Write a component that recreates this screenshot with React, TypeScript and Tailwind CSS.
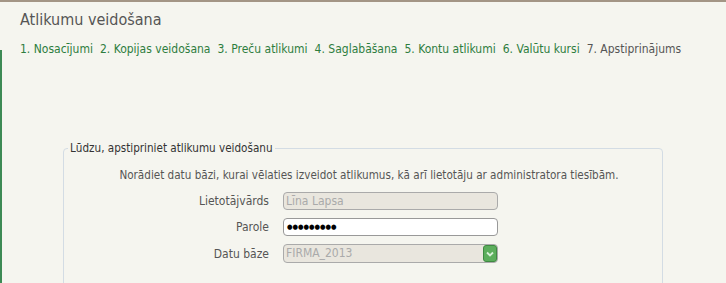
import React from "react";

export default function App() {
  const steps = [
    "1. Nosacījumi",
    "2. Kopijas veidošana",
    "3. Preču atlikumi",
    "4. Saglabāšana",
    "5. Kontu atlikumi",
    "6. Valūtu kursi",
  ];
  return (
    <div
      className="w-[726px] h-[283px] overflow-hidden bg-[#f5f5ef] border-t-2 border-[#a39585] relative"
      style={{ fontFamily: "'DejaVu Sans Condensed', 'DejaVu Sans', sans-serif" }}
    >
      <div className="absolute left-0 top-[48px] bottom-0 w-[2px] bg-[#3d8a55]" />
      <div className="pl-[20px] pt-[8px]">
        <h1 className="text-[16px] leading-[20px] text-[#555]">Atlikumu veidošana</h1>
        <div className="mt-[12px] flex gap-[7px] text-[12px] leading-[14px]">
          {steps.map((s) => (
            <span key={s} className="text-[#2e7d3e]">{s}</span>
          ))}
          <span className="text-[#555]">7. Apstiprinājums</span>
        </div>
      </div>
      <fieldset className="ml-[63px] mt-[85px] w-[600px] h-[200px] border border-[#d3dce4] rounded-[4px] px-[4px]">
        <legend className="text-[11.6px] leading-[14px] text-[#333] px-[2px]">
          Lūdzu, apstipriniet atlikumu veidošanu
        </legend>
        <p className="text-[11.6px] leading-[14px] text-[#555] text-center mt-[13px] pl-[12px]">
          Norādiet datu bāzi, kurai vēlaties izveidot atlikumus, kā arī lietotāju ar administratora tiesībām.
        </p>
        <div className="mt-[10px] flex flex-col gap-[8px]">
          <div className="flex items-center">
            <label className="w-[201px] text-right text-[12px] text-[#555]">Lietotājvārds</label>
            <div className="ml-[14px] w-[215px] h-[18px] rounded-[4px] border border-[#aaa] bg-[#e9e6de] text-[12px] leading-[16px] text-[#aaa] pl-[2px]">
              Līna Lapsa
            </div>
          </div>
          <div className="flex items-center">
            <label className="w-[201px] text-right text-[12px] text-[#555]">Parole</label>
            <div className="ml-[14px] w-[215px] h-[18px] rounded-[4px] border border-[#999] bg-white text-[7px] leading-[16px] text-black pl-[3px]">
              ●●●●●●●●●
            </div>
          </div>
          <div className="flex items-center">
            <label className="w-[201px] text-right text-[12px] text-[#555]">Datu bāze</label>
            <div className="ml-[14px] w-[215px] h-[19px] rounded-[4px] border border-[#aaa] bg-[#e9e6de] text-[12px] leading-[17px] text-[#aaa] pl-[2px] flex items-center justify-between">
              <span>FIRMA_2013</span>
              <span className="w-[14px] h-[17px] rounded-[3px] bg-[#5cae5c] border border-[#3f8a42] flex items-center justify-center">
                <svg width="8" height="6" viewBox="0 0 8 6">
                  <path d="M1 1.5 L4 4.5 L7 1.5" stroke="#d8f0d8" strokeWidth="1.8" fill="none" />
                </svg>
              </span>
            </div>
          </div>
        </div>
      </fieldset>
    </div>
  );
}
